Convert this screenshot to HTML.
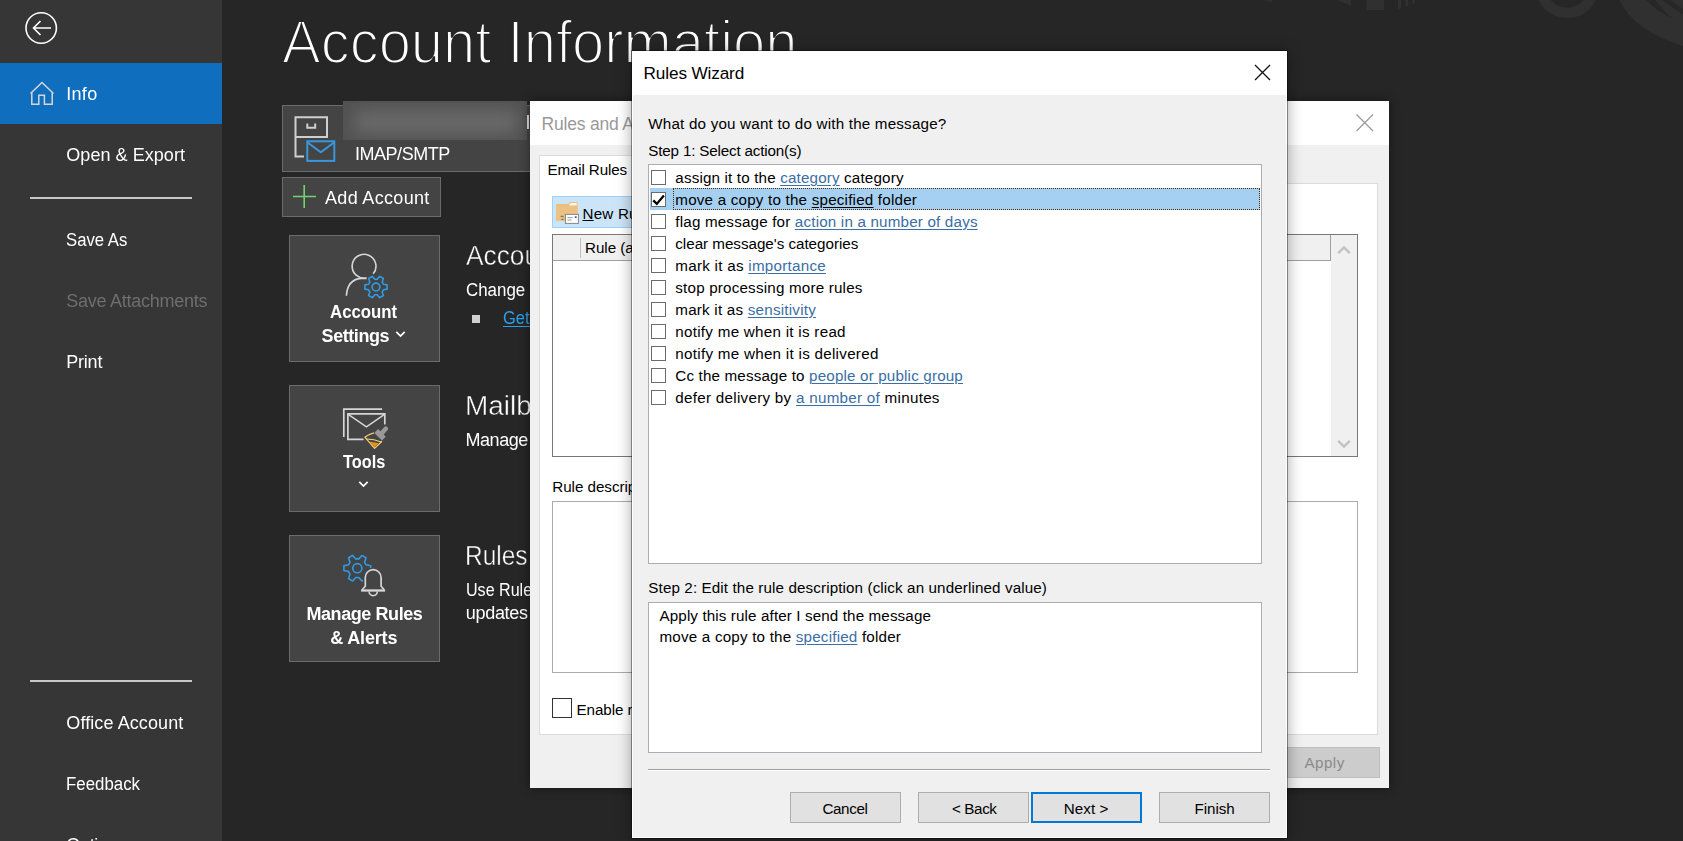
<!DOCTYPE html>
<html><head><meta charset="utf-8"><title>Outlook - Rules Wizard</title>
<style>
*{box-sizing:border-box;margin:0;padding:0}
html,body{width:1683px;height:841px;overflow:hidden;background:#262626;font-family:"Liberation Sans",sans-serif;}
#root{position:relative;width:1683px;height:841px;overflow:hidden;background:#262626}
.abs{position:absolute}
.t{position:absolute;white-space:nowrap;line-height:1;}
.side{left:0;top:0;width:222px;height:841px;background:#363636}
.g{opacity:.999}
.sel{left:0;top:63px;width:222px;height:61px;background:#106ebe}
.sep{left:30px;width:162px;height:2px;background:#c8c8c8}
.tile{width:151px;height:127px;background:#444444;border:1px solid #6a6a6a}
.lnk{color:#3b6ea5;text-decoration:underline;text-decoration-thickness:1px;text-underline-offset:2px}
.cb{position:absolute;left:651px;width:15px;height:15px;background:#fff;border:1px solid #6b6b6b}
.btn{position:absolute;top:792px;height:31px;width:111px;background:#e1e1e1;border:1px solid #adadad}
</style></head><body><div id="root">
<!-- decorative swirls top-right -->
<svg class="abs" style="left:1200px;top:0" width="483" height="130" viewBox="0 0 483 130">
 <circle cx="367.2" cy="-14" r="26.8" fill="none" stroke="#303030" stroke-width="10.4"/>
 <path d="M419.5 0 Q434 31 483 46 V0 Z" fill="#303030"/>
 <path d="M446 0 Q455 10 472.5 18.8 Q460 8 455.5 0 Z" fill="#272727"/>
 <path d="M462 0 L483 14.5 V9 L470 0 Z" fill="#272727"/>
 <g fill="#303030">
  <rect x="166.5" y="0" width="17.5" height="10"/>
  <rect x="198" y="0" width="3" height="8.8"/>
  <rect x="205.5" y="0" width="2.6" height="6.5"/>
  <rect x="212.5" y="0" width="2.4" height="3.5"/>
  <path d="M64 0 H72 V2.5 Z"/>
  <path d="M137 0 H151 V5.8 Z"/>
 </g>
</svg>
<!-- sidebar -->
<div class="abs side"></div>
<div class="abs sel"></div>
<div class="abs sep" style="top:197px"></div>
<div class="abs sep" style="top:680px"></div>
<!-- back arrow -->
<svg class="abs" style="left:22px;top:9px" width="40" height="40" viewBox="0 0 40 40">
 <circle cx="19.2" cy="19" r="15.2" fill="none" stroke="#fff" stroke-width="1.6"/>
 <path d="M29 19 H11.5 M18.5 12 L11.5 19 L18.5 26" fill="none" stroke="#fff" stroke-width="1.6"/>
</svg>
<!-- home icon -->
<svg class="abs" style="left:28px;top:80px" width="28" height="28" viewBox="0 0 28 28">
 <path d="M2.5 13.5 L14 2.5 L25.5 13.5 M3.8 12.5 V24.3 H10.8 V15.2 H16.4 V24.3 H24.2 V12.5" fill="none" stroke="#d6d6d6" stroke-width="1.5" stroke-linejoin="miter"/>
</svg>
<!-- account box -->
<div class="abs" style="left:282px;top:105px;width:260px;height:67px;background:#444;border:1px solid #6a6a6a"></div>
<div class="abs" style="left:343px;top:101px;width:184px;height:39px;background:#525252;overflow:hidden">
 <div class="abs" style="left:12px;top:9px;width:162px;height:24px;background:#696969;filter:blur(8px)"></div>
</div>
<div class="abs" style="left:527px;top:115px;width:2px;height:14px;background:#ddd"></div>
<svg class="abs" style="left:290px;top:112px" width="50" height="54" viewBox="0 0 50 54">
 <path d="M5.5 5.3 H37 V25 H5.5 Z M5.5 25 V44.5 H14" fill="none" stroke="#cfcfcf" stroke-width="2"/>
 <path d="M17.3 11.5 V15.7 H25.2 V11.5" fill="none" stroke="#cfcfcf" stroke-width="2"/>
 <rect x="17.3" y="29.3" width="27" height="19.6" fill="#444" stroke="#3a96dd" stroke-width="2"/>
 <path d="M17.3 30.3 L30.8 40.3 L44.3 30.3" fill="none" stroke="#3a96dd" stroke-width="2"/>
</svg>
<!-- add account -->
<div class="abs" style="left:282px;top:177px;width:159px;height:40px;background:#444;border:1px solid #6a6a6a"></div>
<svg class="abs" style="left:292px;top:184px" width="26" height="26" viewBox="0 0 26 26">
 <path d="M12.2 1 V24 M1 12.5 H24" stroke="#6fd36f" stroke-width="1.6" fill="none"/>
</svg>
<!-- tiles -->
<div class="abs tile" style="left:289px;top:235px"></div>
<div class="abs tile" style="left:289px;top:385px"></div>
<div class="abs tile" style="left:289px;top:535px"></div>
<!-- account settings icon -->
<svg class="abs" style="left:335px;top:245px" width="80" height="60" viewBox="0 0 80 60">
 <path d="M38.2 28.8 A11.9 11.9 0 1 0 31.6 32.8 M11.4 50.8 Q12.4 34.6 26 33.4 H31.6" fill="none" stroke="#d6d6d6" stroke-width="1.6"/>
 <g transform="translate(41 42)" fill="none" stroke="#2f9be6" stroke-width="1.6" stroke-linejoin="round">
  <circle r="3.9"/>
  <path d="M7.38 -2.83 L11.09 -2.16 L11.09 2.16 L7.38 2.83 L6.14 4.97 L7.41 8.53 L3.68 10.68 L1.24 7.80 L-1.24 7.80 L-3.68 10.68 L-7.41 8.53 L-6.14 4.97 L-7.38 2.83 L-11.09 2.16 L-11.09 -2.16 L-7.38 -2.83 L-6.14 -4.97 L-7.41 -8.53 L-3.68 -10.68 L-1.24 -7.80 L1.24 -7.80 L3.68 -10.68 L7.41 -8.53 L6.14 -4.97 Z"/>
 </g>
</svg>
<!-- chevrons -->
<svg class="abs" style="left:395px;top:330px" width="12" height="9" viewBox="0 0 12 9"><path d="M1.3 1.8 L5.5 6 L9.7 1.8" fill="none" stroke="#fff" stroke-width="1.7"/></svg>
<svg class="abs" style="left:358px;top:480px" width="12" height="9" viewBox="0 0 12 9"><path d="M1.3 1.8 L5.5 6 L9.7 1.8" fill="none" stroke="#fff" stroke-width="1.7"/></svg>
<!-- tools icon -->
<svg class="abs" style="left:335px;top:400px" width="80" height="60" viewBox="0 0 80 60">
 <path d="M8.8 37.1 V9.1 H47.1" fill="none" stroke="#d6d6d6" stroke-width="1.7"/>
 <path d="M49.8 24.6 V13.9 H12.9 V39.3 H28.6" fill="none" stroke="#d6d6d6" stroke-width="1.7"/>
 <path d="M13.6 14.6 L31.4 26.8 L49.2 14.6" fill="none" stroke="#d6d6d6" stroke-width="1.5"/>
 <path d="M50.8 28.8 L45.6 34.4" fill="none" stroke="#999" stroke-width="4.6" stroke-linecap="round"/>
 <path d="M41.2 31 L48.9 38.6" fill="none" stroke="#999" stroke-width="5.4"/>
 <path d="M38.9 32.8 Q33.5 34.3 29.8 37.2 L39.6 48.4 L47 41.2" fill="none" stroke="#f3d27c" stroke-width="1.2" stroke-linejoin="round"/>
 <path d="M31.6 39 Q39 39.2 46.2 41.9" fill="none" stroke="#f3d27c" stroke-width="1.1"/>
 <path d="M34.4 41.4 L43.7 43.3 L39.6 47.2 Z" fill="#e8921a"/>
</svg>
<!-- rules icon -->
<svg class="abs" style="left:335px;top:548px" width="80" height="60" viewBox="0 0 80 60">
 <g transform="translate(22.3 20.2)" fill="none" stroke="#2f9be6" stroke-width="1.6" stroke-linejoin="round">
  <circle r="4.6"/>
  <path d="M8.78 -3.37 L13.39 -2.36 L13.39 2.36 L8.78 3.37 L7.31 5.92 L8.74 10.42 L4.65 12.78 L1.47 9.28 L-1.47 9.28 L-4.65 12.78 L-8.74 10.42 L-7.31 5.92 L-8.78 3.37 L-13.39 2.36 L-13.39 -2.36 L-8.78 -3.37 L-7.31 -5.92 L-8.74 -10.42 L-4.65 -12.78 L-1.47 -9.28 L1.47 -9.28 L4.65 -12.78 L8.74 -10.42 L7.31 -5.92 Z"/>
 </g>
 <path d="M26.6 42.5 L30.3 38.3 V29.6 A7.9 7.9 0 0 1 46.1 29.6 V38.3 L49.8 42.5 Z" fill="#444" stroke="#444" stroke-width="4.4"/>
 <path d="M27.2 41.8 L30.3 38.3 V29.6 A7.9 7.9 0 0 1 46.1 29.6 V38.3 L49.2 41.8" fill="none" stroke="#d6d6d6" stroke-width="1.7"/>
 <path d="M26.1 42.5 H50.1" fill="none" stroke="#d6d6d6" stroke-width="2.3"/>
 <path d="M34.1 43.6 A4.1 4.1 0 0 0 42.3 43.6" fill="none" stroke="#d6d6d6" stroke-width="1.6"/>
</svg>
<!-- bullet -->
<div class="abs" style="left:472px;top:315px;width:8px;height:8px;background:#d0d0d0"></div>
<div class="t g" style="left:282.3px;top:12.1px;font-size:60.5px;transform:scaleX(0.9581);transform-origin:0 0;color:#fff;-webkit-text-stroke:2.1px #262626;/*sx*/">Account Information</div>
<div class="t g" style="left:66.3px;top:84.5px;font-size:18px;letter-spacing:0.277px;color:#fff;">Info</div>
<div class="t g" style="left:66.3px;top:145.5px;font-size:18px;letter-spacing:0.050px;color:#fff;">Open &amp; Export</div>
<div class="t g" style="left:66.3px;top:230.5px;font-size:18px;transform:scaleX(0.9281);transform-origin:0 0;color:#fff;">Save As</div>
<div class="t g" style="left:66.3px;top:291.5px;font-size:18px;letter-spacing:-0.264px;color:#6e6e6e;">Save Attachments</div>
<div class="t g" style="left:66.3px;top:352.5px;font-size:18px;letter-spacing:-0.226px;color:#fff;">Print</div>
<div class="t g" style="left:66.3px;top:713.5px;font-size:18px;letter-spacing:0.094px;color:#fff;">Office Account</div>
<div class="t g" style="left:66.3px;top:774.5px;font-size:18px;transform:scaleX(0.9360);transform-origin:0 0;color:#fff;">Feedback</div>
<div class="t g" style="left:66.3px;top:835.5px;font-size:18px;letter-spacing:-0.315px;color:#fff;">Options</div>
<div class="t g" style="left:355.0px;top:144.5px;font-size:18px;letter-spacing:-0.472px;color:#fff;">IMAP/SMTP</div>
<div class="t g" style="left:325.0px;top:188.5px;font-size:18px;letter-spacing:0.326px;color:#fff;">Add Account</div>
<div class="t g" style="left:330.2px;top:303.1px;font-size:18px;transform:scaleX(0.9333);transform-origin:0 0;color:#fff;font-weight:bold;">Account</div>
<div class="t g" style="left:321.6px;top:327.0px;font-size:18px;letter-spacing:-0.442px;color:#fff;font-weight:bold;">Settings</div>
<div class="t g" style="left:343.3px;top:453.0px;font-size:18px;transform:scaleX(0.9063);transform-origin:0 0;color:#fff;font-weight:bold;">Tools</div>
<div class="t g" style="left:306.4px;top:604.8px;font-size:18px;letter-spacing:-0.413px;color:#fff;font-weight:bold;">Manage Rules</div>
<div class="t g" style="left:330.2px;top:628.9px;font-size:18px;letter-spacing:-0.155px;color:#fff;font-weight:bold;">&amp; Alerts</div>
<div class="t g" style="left:465.5px;top:242.7px;font-size:27px;transform:scaleX(0.9745);transform-origin:0 0;color:#fff;-webkit-text-stroke:.45px #262626;/*sx*/">Account Settings</div>
<div class="t g" style="left:465.8px;top:280.5px;font-size:18px;transform:scaleX(0.9388);transform-origin:0 0;color:#fff;">Change settings for this account</div>
<div class="t g" style="left:503.2px;top:309.4px;font-size:18px;transform:scaleX(0.9133);transform-origin:0 0;color:#2aa0ea;text-decoration:underline;text-underline-offset:2px;">Get the Outlook app</div>
<div class="t g" style="left:464.6px;top:392.7px;font-size:27px;transform:scaleX(1.0340);transform-origin:0 0;color:#fff;-webkit-text-stroke:.45px #262626;/*sx*/">Mailbox Settings</div>
<div class="t g" style="left:465.5px;top:430.5px;font-size:18px;letter-spacing:-0.448px;color:#fff;">Manage the size of your</div>
<div class="t g" style="left:464.6px;top:542.7px;font-size:27px;transform:scaleX(0.9068);transform-origin:0 0;color:#fff;-webkit-text-stroke:.45px #262626;/*sx*/">Rules and Alerts</div>
<div class="t g" style="left:465.5px;top:580.5px;font-size:18px;transform:scaleX(0.8933);transform-origin:0 0;color:#fff;">Use Rules and Alerts</div>
<div class="t g" style="left:465.8px;top:604.0px;font-size:18px;letter-spacing:-0.317px;color:#fff;">updates when items</div>
<!-- Rules and Alerts dialog (behind) -->
<div class="abs" style="left:530px;top:101px;width:859px;height:687px;background:#f0f0f0;box-shadow:0 0 10px rgba(0,0,0,.45)"></div>
<div class="abs" style="left:530px;top:101px;width:859px;height:44px;background:#fff"></div>
<svg class="abs" style="left:1355px;top:113px" width="20" height="20" viewBox="0 0 20 20"><path d="M1.5 1.5 L18 18 M18 1.5 L1.5 18" stroke="#9a9a9a" stroke-width="1.2" fill="none"/></svg>
<!-- tab panel -->
<div class="abs" style="left:539px;top:183px;width:839px;height:552px;background:#fff;border:1px solid #dcdcdc"></div>
<div class="abs" style="left:539px;top:155px;width:100px;height:30px;background:#fff;border:1px solid #dcdcdc;border-bottom:none"></div>
<!-- new rule button -->
<div class="abs" style="left:552px;top:196px;width:90px;height:32px;background:#cce4f7;border:1px solid #99d1ff"></div>
<svg class="abs" style="left:555px;top:200px" width="26" height="26" viewBox="0 0 26 26">
 <path d="M1 5 Q1 4 2 4 H13.5 L15 2.1 H21.6 Q22.6 2.1 22.6 3.1 V20.7 H1 Z" fill="#e9bf80"/>
 <path d="M14.6 4.6 L15.8 3 H21.6 V5.4 H14 Z" fill="#fdf6ea"/>
 <path d="M1 6.2 H22.6 V20.7 H1 Z" fill="#ebc284"/>
 <rect x="10.4" y="14.4" width="13" height="9" fill="#fff" stroke="#858585" stroke-width="1"/>
 <path d="M12.5 17.6 H17.6 M12.5 20 H16.6" stroke="#9a9a9a" stroke-width="1"/>
 <rect x="19.8" y="16.2" width="1.8" height="1.8" fill="#2b6cc4"/>
 <path d="M5.6 16.3 H8.6 M6.4 19.3 H8.6" stroke="#7d7468" stroke-width="1.2"/>
</svg>
<!-- list -->
<div class="abs" style="left:552px;top:234px;width:806px;height:223px;background:#fff;border:1px solid #787878"></div>
<div class="abs" style="left:553px;top:235px;width:778px;height:26px;background:#f0f0f0;border-right:1px solid #a0a0a0;border-bottom:1px solid #a0a0a0"></div>
<div class="abs" style="left:580px;top:238px;width:1px;height:20px;background:#c0c0c0"></div>
<div class="abs" style="left:1331px;top:235px;width:26px;height:221px;background:#f0f0f0"></div>
<svg class="abs" style="left:1337px;top:245px" width="14" height="10" viewBox="0 0 14 10"><path d="M1.2 8.2 L7 2.4 L12.8 8.2" fill="none" stroke="#c2c2c2" stroke-width="2.4"/></svg>
<svg class="abs" style="left:1337px;top:439px" width="14" height="10" viewBox="0 0 14 10"><path d="M1.2 1.8 L7 7.6 L12.8 1.8" fill="none" stroke="#c2c2c2" stroke-width="2.4"/></svg>
<!-- rule description box -->
<div class="abs" style="left:552px;top:501px;width:806px;height:172px;background:#fff;border:1px solid #ababab"></div>
<!-- checkbox -->
<div class="abs" style="left:552px;top:698px;width:20px;height:20px;background:#fff;border:1px solid #333"></div>
<!-- apply button -->
<div class="abs" style="left:1268px;top:747px;width:112px;height:31px;background:#cccccc;border:1px solid #bfbfbf"></div>
<div class="t" style="left:541.5px;top:116.4px;font-size:17.5px;letter-spacing:-0.200px;color:#9a9a9a;">Rules and Alerts</div>
<div class="t" style="left:547.5px;top:161.8px;font-size:15.2px;letter-spacing:-0.146px;color:#000;">Email Rules</div>
<div class="t" style="left:582.5px;top:206.3px;font-size:15.2px;letter-spacing:0.200px;color:#000;"><u>N</u>ew Rule</div>
<div class="t" style="left:585.0px;top:240.3px;font-size:15.2px;letter-spacing:-0.050px;color:#000;">Rule (applied</div>
<div class="t" style="left:552.3px;top:478.9px;font-size:15.2px;letter-spacing:-0.045px;color:#000;">Rule description</div>
<div class="t" style="left:576.6px;top:701.8px;font-size:15.2px;letter-spacing:-0.104px;color:#000;">Enable rules</div>
<div class="t" style="left:1304.5px;top:755.1px;font-size:15.2px;letter-spacing:0.444px;color:#8a8a8a;">Apply</div>
<!-- Rules Wizard dialog -->
<div class="abs" style="left:632px;top:51px;width:655px;height:787px;background:#f0f0f0;border:1px solid #fdfdfd;box-shadow:0 0 0 1px rgba(0,0,0,.38),0 1px 14px rgba(0,0,0,.38)"></div>
<div class="abs" style="left:632px;top:51px;width:655px;height:44px;background:#fff"></div>
<svg class="abs" style="left:1253px;top:63px" width="20" height="20" viewBox="0 0 20 20"><path d="M2 2 L17 17 M17 2 L2 17" stroke="#111" stroke-width="1.3" fill="none"/></svg>
<!-- list -->
<div class="abs" style="left:648px;top:164px;width:614px;height:400px;background:#fff;border:1px solid #abadb3"></div>
<div class="abs" style="left:650px;top:188px;width:610px;height:22px;background:#a5d0f1"></div>
<div class="abs" style="left:673px;top:188px;width:587px;height:22px;border:1px dotted #52300f"></div>
<div class="cb" style="top:170px"></div><div class="cb" style="top:192px"></div><div class="cb" style="top:214px"></div><div class="cb" style="top:236px"></div><div class="cb" style="top:258px"></div><div class="cb" style="top:280px"></div><div class="cb" style="top:302px"></div><div class="cb" style="top:324px"></div><div class="cb" style="top:346px"></div><div class="cb" style="top:368px"></div><div class="cb" style="top:390px"></div>
<svg class="abs" style="left:652px;top:193px" width="14" height="14" viewBox="0 0 14 14"><path d="M1.3 7.4 L4.8 10.9 L11.9 2.6" fill="none" stroke="#000" stroke-width="2.3"/></svg>
<!-- step 2 box -->
<div class="abs" style="left:648px;top:602px;width:614px;height:151px;background:#fff;border:1px solid #abadb3"></div>
<div class="abs" style="left:648px;top:769px;width:622px;height:1px;background:#a0a0a0"></div>
<div class="abs" style="left:648px;top:770px;width:622px;height:1px;background:#fff"></div>
<!-- buttons -->
<div class="btn" style="left:790px"></div>
<div class="btn" style="left:918px"></div>
<div class="btn" style="left:1031px;border:2px solid #0078d7"></div>
<div class="btn" style="left:1159px"></div>
<div class="t" style="left:643.6px;top:65.3px;font-size:17.2px;letter-spacing:-0.139px;color:#000;">Rules Wizard</div>
<div class="t" style="left:648.3px;top:116.2px;font-size:15.2px;letter-spacing:0.194px;color:#000;">What do you want to do with the message?</div>
<div class="t" style="left:648.3px;top:142.6px;font-size:15.2px;letter-spacing:-0.167px;color:#000;">Step 1: Select action(s)</div>
<div class="t" style="left:675.3px;top:169.6px;font-size:15.2px;letter-spacing:0.161px;color:#000;">assign it to the <span class="lnk">category</span> category</div>
<div class="t" style="left:675.3px;top:191.6px;font-size:15.2px;letter-spacing:0.202px;color:#000;">move a copy to the <span style="text-decoration:underline;text-underline-offset:2px">specified</span> folder</div>
<div class="t" style="left:675.3px;top:213.6px;font-size:15.2px;letter-spacing:0.180px;color:#000;">flag message for <span class="lnk">action in a number of days</span></div>
<div class="t" style="left:675.3px;top:235.6px;font-size:15.2px;letter-spacing:-0.022px;color:#000;">clear message's categories</div>
<div class="t" style="left:675.3px;top:257.6px;font-size:15.2px;letter-spacing:0.264px;color:#000;">mark it as <span class="lnk">importance</span></div>
<div class="t" style="left:675.3px;top:279.6px;font-size:15.2px;letter-spacing:0.190px;color:#000;">stop processing more rules</div>
<div class="t" style="left:675.3px;top:301.6px;font-size:15.2px;letter-spacing:0.219px;color:#000;">mark it as <span class="lnk">sensitivity</span></div>
<div class="t" style="left:675.3px;top:323.6px;font-size:15.2px;letter-spacing:0.271px;color:#000;">notify me when it is read</div>
<div class="t" style="left:675.3px;top:345.6px;font-size:15.2px;letter-spacing:0.278px;color:#000;">notify me when it is delivered</div>
<div class="t" style="left:675.3px;top:367.6px;font-size:15.2px;letter-spacing:0.163px;color:#000;">Cc the message to <span class="lnk">people or public group</span></div>
<div class="t" style="left:675.3px;top:389.6px;font-size:15.2px;letter-spacing:0.279px;color:#000;">defer delivery by <span class="lnk">a number of</span> minutes</div>
<div class="t" style="left:648.3px;top:579.9px;font-size:15.2px;letter-spacing:0.115px;color:#000;">Step 2: Edit the rule description (click an underlined value)</div>
<div class="t" style="left:659.5px;top:608.0px;font-size:15.2px;letter-spacing:0.119px;color:#000;">Apply this rule after I send the message</div>
<div class="t" style="left:659.5px;top:629.3px;font-size:15.2px;letter-spacing:0.197px;color:#000;">move a copy to the <span class="lnk">specified</span> folder</div>
<div class="t" style="left:822.4px;top:801.3px;font-size:15.2px;letter-spacing:-0.360px;color:#000;">Cancel</div>
<div class="t" style="left:951.9px;top:801.3px;font-size:15.2px;letter-spacing:-0.356px;color:#000;">&lt; Back</div>
<div class="t" style="left:1063.8px;top:801.3px;font-size:15.2px;letter-spacing:0.031px;color:#000;">Next &gt;</div>
<div class="t" style="left:1194.6px;top:801.3px;font-size:15.2px;letter-spacing:-0.076px;color:#000;">Finish</div>


</div></body></html>
